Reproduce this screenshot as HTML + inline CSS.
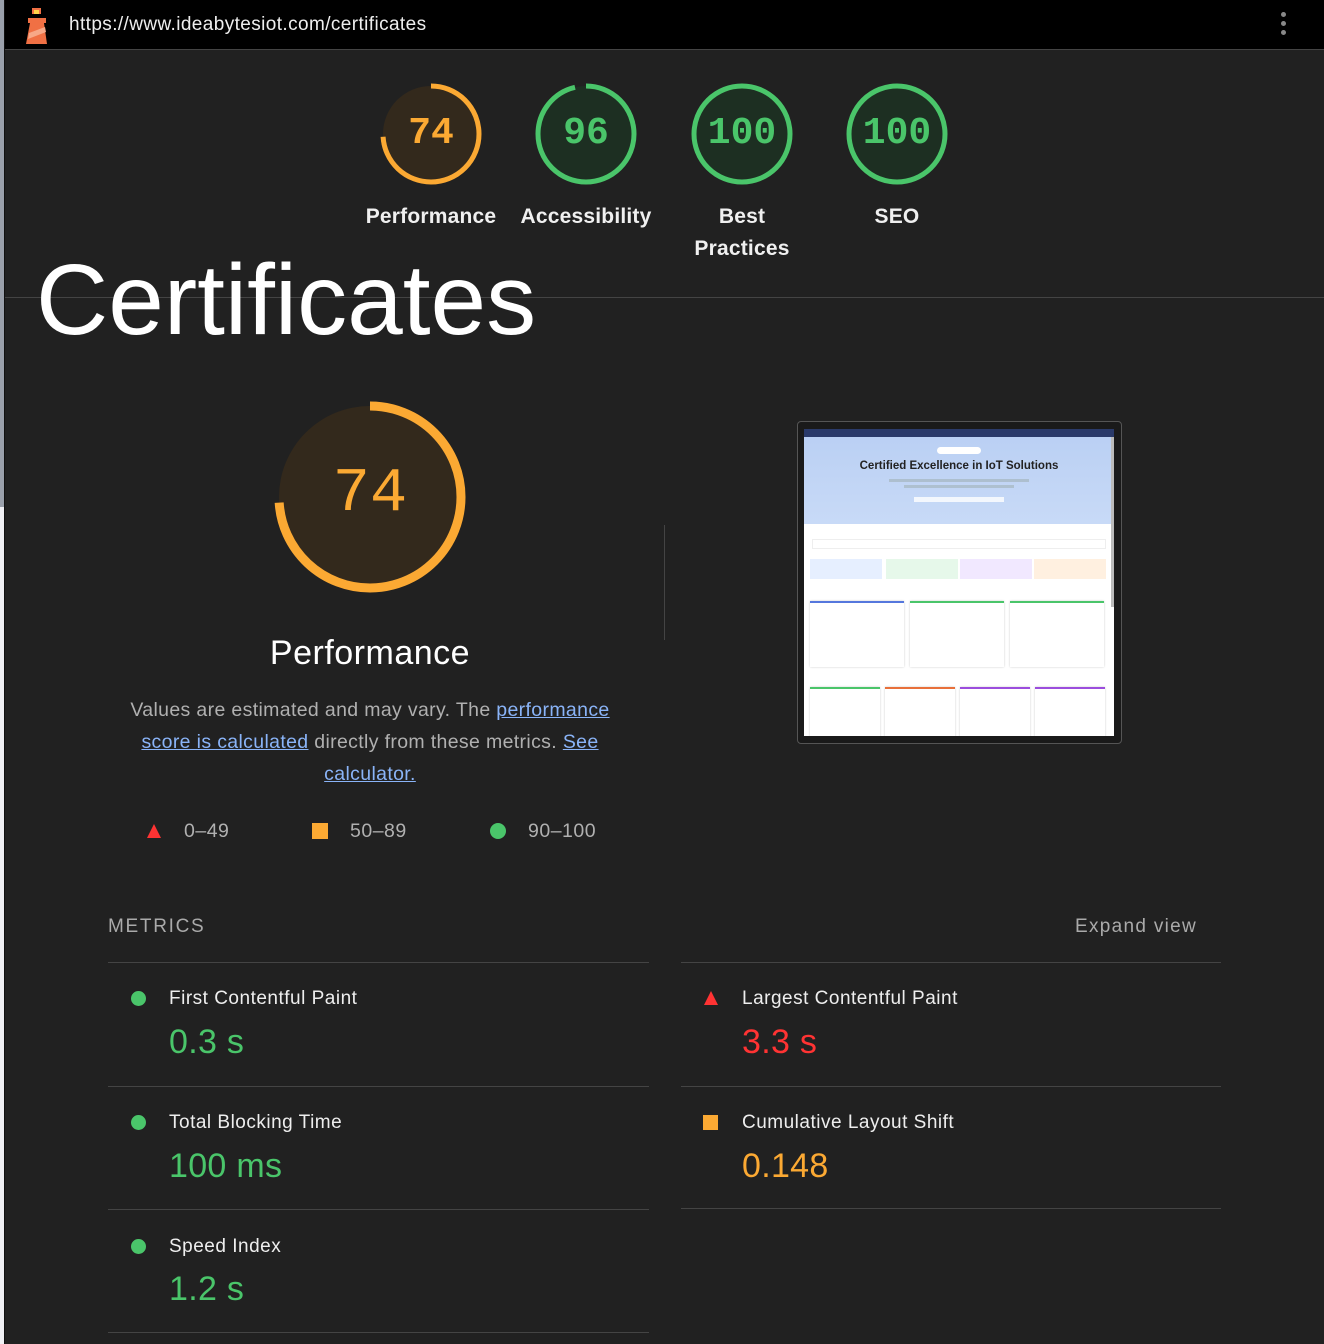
<!DOCTYPE html>
<html><head><meta charset="utf-8"><style>
*{margin:0;padding:0;box-sizing:border-box}
body{width:1324px;height:1344px;background:#212121;font-family:"Liberation Sans",sans-serif;color:#fff;position:relative;overflow:hidden}
.a{position:absolute}
.lbl{font-size:21px;text-align:center;width:160px;line-height:32px;font-weight:bold;letter-spacing:.2px;color:#f0f0f0}
.gn{font-family:"Liberation Mono",monospace;font-size:38px;text-align:center;width:110px;font-weight:bold}
.mt{font-size:19px;color:#eee;letter-spacing:.5px}
.mv{font-size:34px;letter-spacing:.3px}
.hr{height:1px;background:#444}
</style></head><body>
<div class="a" style="left:0;top:0;width:4px;height:507px;background:#9aa0ab"></div>
<div class="a" style="left:0;top:507px;width:4px;height:837px;background:#f0f0f4"></div>
<div class="a" style="left:4px;top:0;width:1px;height:1344px;background:#111"></div>
<div class="a" style="left:5px;top:0;right:0;height:50px;background:#000;border-bottom:1px solid #444"></div>
<svg class="a" style="left:24px;top:6px" width="26" height="40" viewBox="0 0 26 40"><rect x="8" y="2" width="9" height="6" fill="#f07044"/><rect x="10" y="4" width="5" height="4" fill="#ffd54a"/><rect x="4" y="12" width="18" height="5" fill="#f07044"/><polygon points="6,17 20,17 23,38 2,38" fill="#f07044"/><polygon points="5,27 21,21 22,26 4,33" fill="#f7a887"/></svg>
<div class="a" style="left:69px;top:14px;font-size:19px;color:#eee;letter-spacing:.4px">https://www.ideabytesiot.com/certificates</div>
<div class="a" style="left:1281px;top:12px;width:5px"><div style="width:5px;height:5px;border-radius:50%;background:#888;margin-bottom:4px"></div><div style="width:5px;height:5px;border-radius:50%;background:#888;margin-bottom:4px"></div><div style="width:5px;height:5px;border-radius:50%;background:#888"></div></div>

<svg class="a" style="left:0;top:0" width="1324" height="300">
<circle cx="431" cy="134" r="48" fill="#33291c" stroke="none"/>
<circle cx="431" cy="134" r="48" fill="none" stroke="#fba933" stroke-width="5" stroke-dasharray="223 302" transform="rotate(-90 431 134)"/>
<circle cx="586" cy="134" r="48" fill="#1d2f22" stroke="#4ac56a" stroke-width="5" stroke-dasharray="290 302" transform="rotate(-90 586 134)"/>
<circle cx="742" cy="134" r="48" fill="#1d2f22" stroke="#4ac56a" stroke-width="5"/>
<circle cx="897" cy="134" r="48" fill="#1d2f22" stroke="#4ac56a" stroke-width="5"/>
</svg>
<div class="a gn" style="left:376px;top:112px;color:#fba933">74</div>
<div class="a gn" style="left:531px;top:112px;color:#4ac56a">96</div>
<div class="a gn" style="left:687px;top:112px;color:#4ac56a">100</div>
<div class="a gn" style="left:842px;top:112px;color:#4ac56a">100</div>
<div class="a lbl" style="left:351px;top:201px">Performance</div>
<div class="a lbl" style="left:506px;top:201px">Accessibility</div>
<div class="a lbl" style="left:662px;top:201px">Best<br>Practices</div>
<div class="a lbl" style="left:817px;top:201px">SEO</div>
<div class="a" style="left:5px;top:297px;right:0;height:1px;background:#444"></div>
<div class="a" style="left:36px;top:240px;font-size:100px;line-height:120px;color:#fff">Certificates</div>

<svg class="a" style="left:270px;top:397px" width="200" height="200">
<circle cx="100" cy="100" r="91" fill="#33291c" stroke="#fba933" stroke-width="9" stroke-dasharray="423 572" transform="rotate(-90 100 100)"/>
</svg>
<div class="a" style="left:300px;top:458px;width:140px;text-align:center;font-family:'Liberation Mono',monospace;font-size:62px;color:#fba933">74</div>
<div class="a" style="left:220px;top:634px;width:300px;text-align:center;font-size:34px;letter-spacing:.5px">Performance</div>
<div class="a" style="left:115px;top:694px;width:510px;text-align:center;font-size:19.5px;line-height:32px;color:#b0b0b0;letter-spacing:.35px">Values are estimated and may vary. The <u style="color:#8ab4f8">performance score is calculated</u> directly from these metrics. <u style="color:#8ab4f8">See calculator.</u></div>
<svg class="a" style="left:146px;top:823px" width="16" height="16"><polygon points="8,1 15,15 1,15" fill="#f33"/></svg>
<div class="a" style="left:184px;top:820px;font-size:19.5px;color:#b0b0b0;letter-spacing:.5px">0–49</div>
<div class="a" style="left:312px;top:823px;width:16px;height:16px;background:#fba933"></div>
<div class="a" style="left:350px;top:820px;font-size:19.5px;color:#b0b0b0;letter-spacing:.5px">50–89</div>
<div class="a" style="left:490px;top:823px;width:16px;height:16px;border-radius:50%;background:#4ac56a"></div>
<div class="a" style="left:528px;top:820px;font-size:19.5px;color:#b0b0b0;letter-spacing:.5px">90–100</div>
<div class="a" style="left:664px;top:525px;width:1px;height:115px;background:#444"></div>

<div class="a" style="left:797px;top:421px;width:325px;height:323px;border:1px solid #555;border-radius:4px;background:#1a1a1a"></div>
<div class="a" style="left:804px;top:429px;width:310px;height:307px;background:#fff;overflow:hidden">
<div style="height:95px;background:linear-gradient(#b9cff3,#c8daf7)"></div>
<div style="position:absolute;left:0;top:0;width:310px;height:8px;background:#2a3a6a"></div>
<div style="position:absolute;left:0;top:31px;width:310px;text-align:center;font-size:11.5px;font-weight:bold;color:#222">Certified Excellence in IoT Solutions</div>
<div style="position:absolute;left:133px;top:18px;width:44px;height:7px;border-radius:4px;background:#fff"></div>
<div style="position:absolute;left:85px;top:50px;width:140px;height:3px;background:#9aa;opacity:.5"></div>
<div style="position:absolute;left:100px;top:56px;width:110px;height:3px;background:#9aa;opacity:.5"></div>
<div style="position:absolute;left:110px;top:68px;width:90px;height:5px;background:#fff;opacity:.8"></div>
<div style="position:absolute;left:8px;top:110px;width:294px;height:10px;border:1px solid #eee"></div>
<div style="position:absolute;left:6px;top:130px;width:72px;height:20px;background:#e6efff"></div>
<div style="position:absolute;left:82px;top:130px;width:72px;height:20px;background:#e6f8ea"></div>
<div style="position:absolute;left:156px;top:130px;width:72px;height:20px;background:#f1e8ff"></div>
<div style="position:absolute;left:230px;top:130px;width:72px;height:20px;background:#fff0e0"></div>
<div style="position:absolute;left:6px;top:172px;width:94px;height:66px;border-top:2px solid #5577dd;box-shadow:0 0 2px #ccc"></div>
<div style="position:absolute;left:106px;top:172px;width:94px;height:66px;border-top:2px solid #4ac56a;box-shadow:0 0 2px #ccc"></div>
<div style="position:absolute;left:206px;top:172px;width:94px;height:66px;border-top:2px solid #4ac56a;box-shadow:0 0 2px #ccc"></div>
<div style="position:absolute;left:6px;top:258px;width:70px;height:60px;border-top:2px solid #4ac56a;box-shadow:0 0 2px #ccc"></div>
<div style="position:absolute;left:81px;top:258px;width:70px;height:60px;border-top:2px solid #e8703a;box-shadow:0 0 2px #ccc"></div>
<div style="position:absolute;left:156px;top:258px;width:70px;height:60px;border-top:2px solid #9b4ddd;box-shadow:0 0 2px #ccc"></div>
<div style="position:absolute;left:231px;top:258px;width:70px;height:60px;border-top:2px solid #9b4ddd;box-shadow:0 0 2px #ccc"></div>
<div style="position:absolute;right:0;top:8px;width:3px;height:170px;background:#bbb"></div>
</div>

<div class="a" style="left:108px;top:916px;font-size:19px;letter-spacing:1.7px;color:#aaa">METRICS</div>
<div class="a" style="left:1075px;top:916px;font-size:19px;letter-spacing:1.3px;color:#aaa">Expand view</div>
<div class="a hr" style="left:108px;top:962px;width:541px"></div>
<div class="a hr" style="left:681px;top:962px;width:540px"></div>
<div class="a hr" style="left:108px;top:1086px;width:541px"></div>
<div class="a hr" style="left:681px;top:1086px;width:540px"></div>
<div class="a hr" style="left:108px;top:1209px;width:541px"></div>
<div class="a hr" style="left:681px;top:1208px;width:540px"></div>
<div class="a hr" style="left:108px;top:1332px;width:541px"></div>

<div class="a" style="left:131px;top:991px;width:15px;height:15px;border-radius:50%;background:#4ac56a"></div>
<div class="a mt" style="left:169px;top:988px">First Contentful Paint</div>
<div class="a mv" style="left:169px;top:1023px;color:#4ac56a">0.3 s</div>
<div class="a" style="left:131px;top:1115px;width:15px;height:15px;border-radius:50%;background:#4ac56a"></div>
<div class="a mt" style="left:169px;top:1112px">Total Blocking Time</div>
<div class="a mv" style="left:169px;top:1147px;color:#4ac56a">100 ms</div>
<div class="a" style="left:131px;top:1239px;width:15px;height:15px;border-radius:50%;background:#4ac56a"></div>
<div class="a mt" style="left:169px;top:1236px">Speed Index</div>
<div class="a mv" style="left:169px;top:1270px;color:#4ac56a">1.2 s</div>

<svg class="a" style="left:703px;top:990px" width="16" height="16"><polygon points="8,1 15,15 1,15" fill="#f33"/></svg>
<div class="a mt" style="left:742px;top:988px">Largest Contentful Paint</div>
<div class="a mv" style="left:742px;top:1023px;color:#f33">3.3 s</div>
<div class="a" style="left:703px;top:1115px;width:15px;height:15px;background:#fba933"></div>
<div class="a mt" style="left:742px;top:1112px">Cumulative Layout Shift</div>
<div class="a mv" style="left:742px;top:1147px;color:#fba933">0.148</div>
</body></html>
